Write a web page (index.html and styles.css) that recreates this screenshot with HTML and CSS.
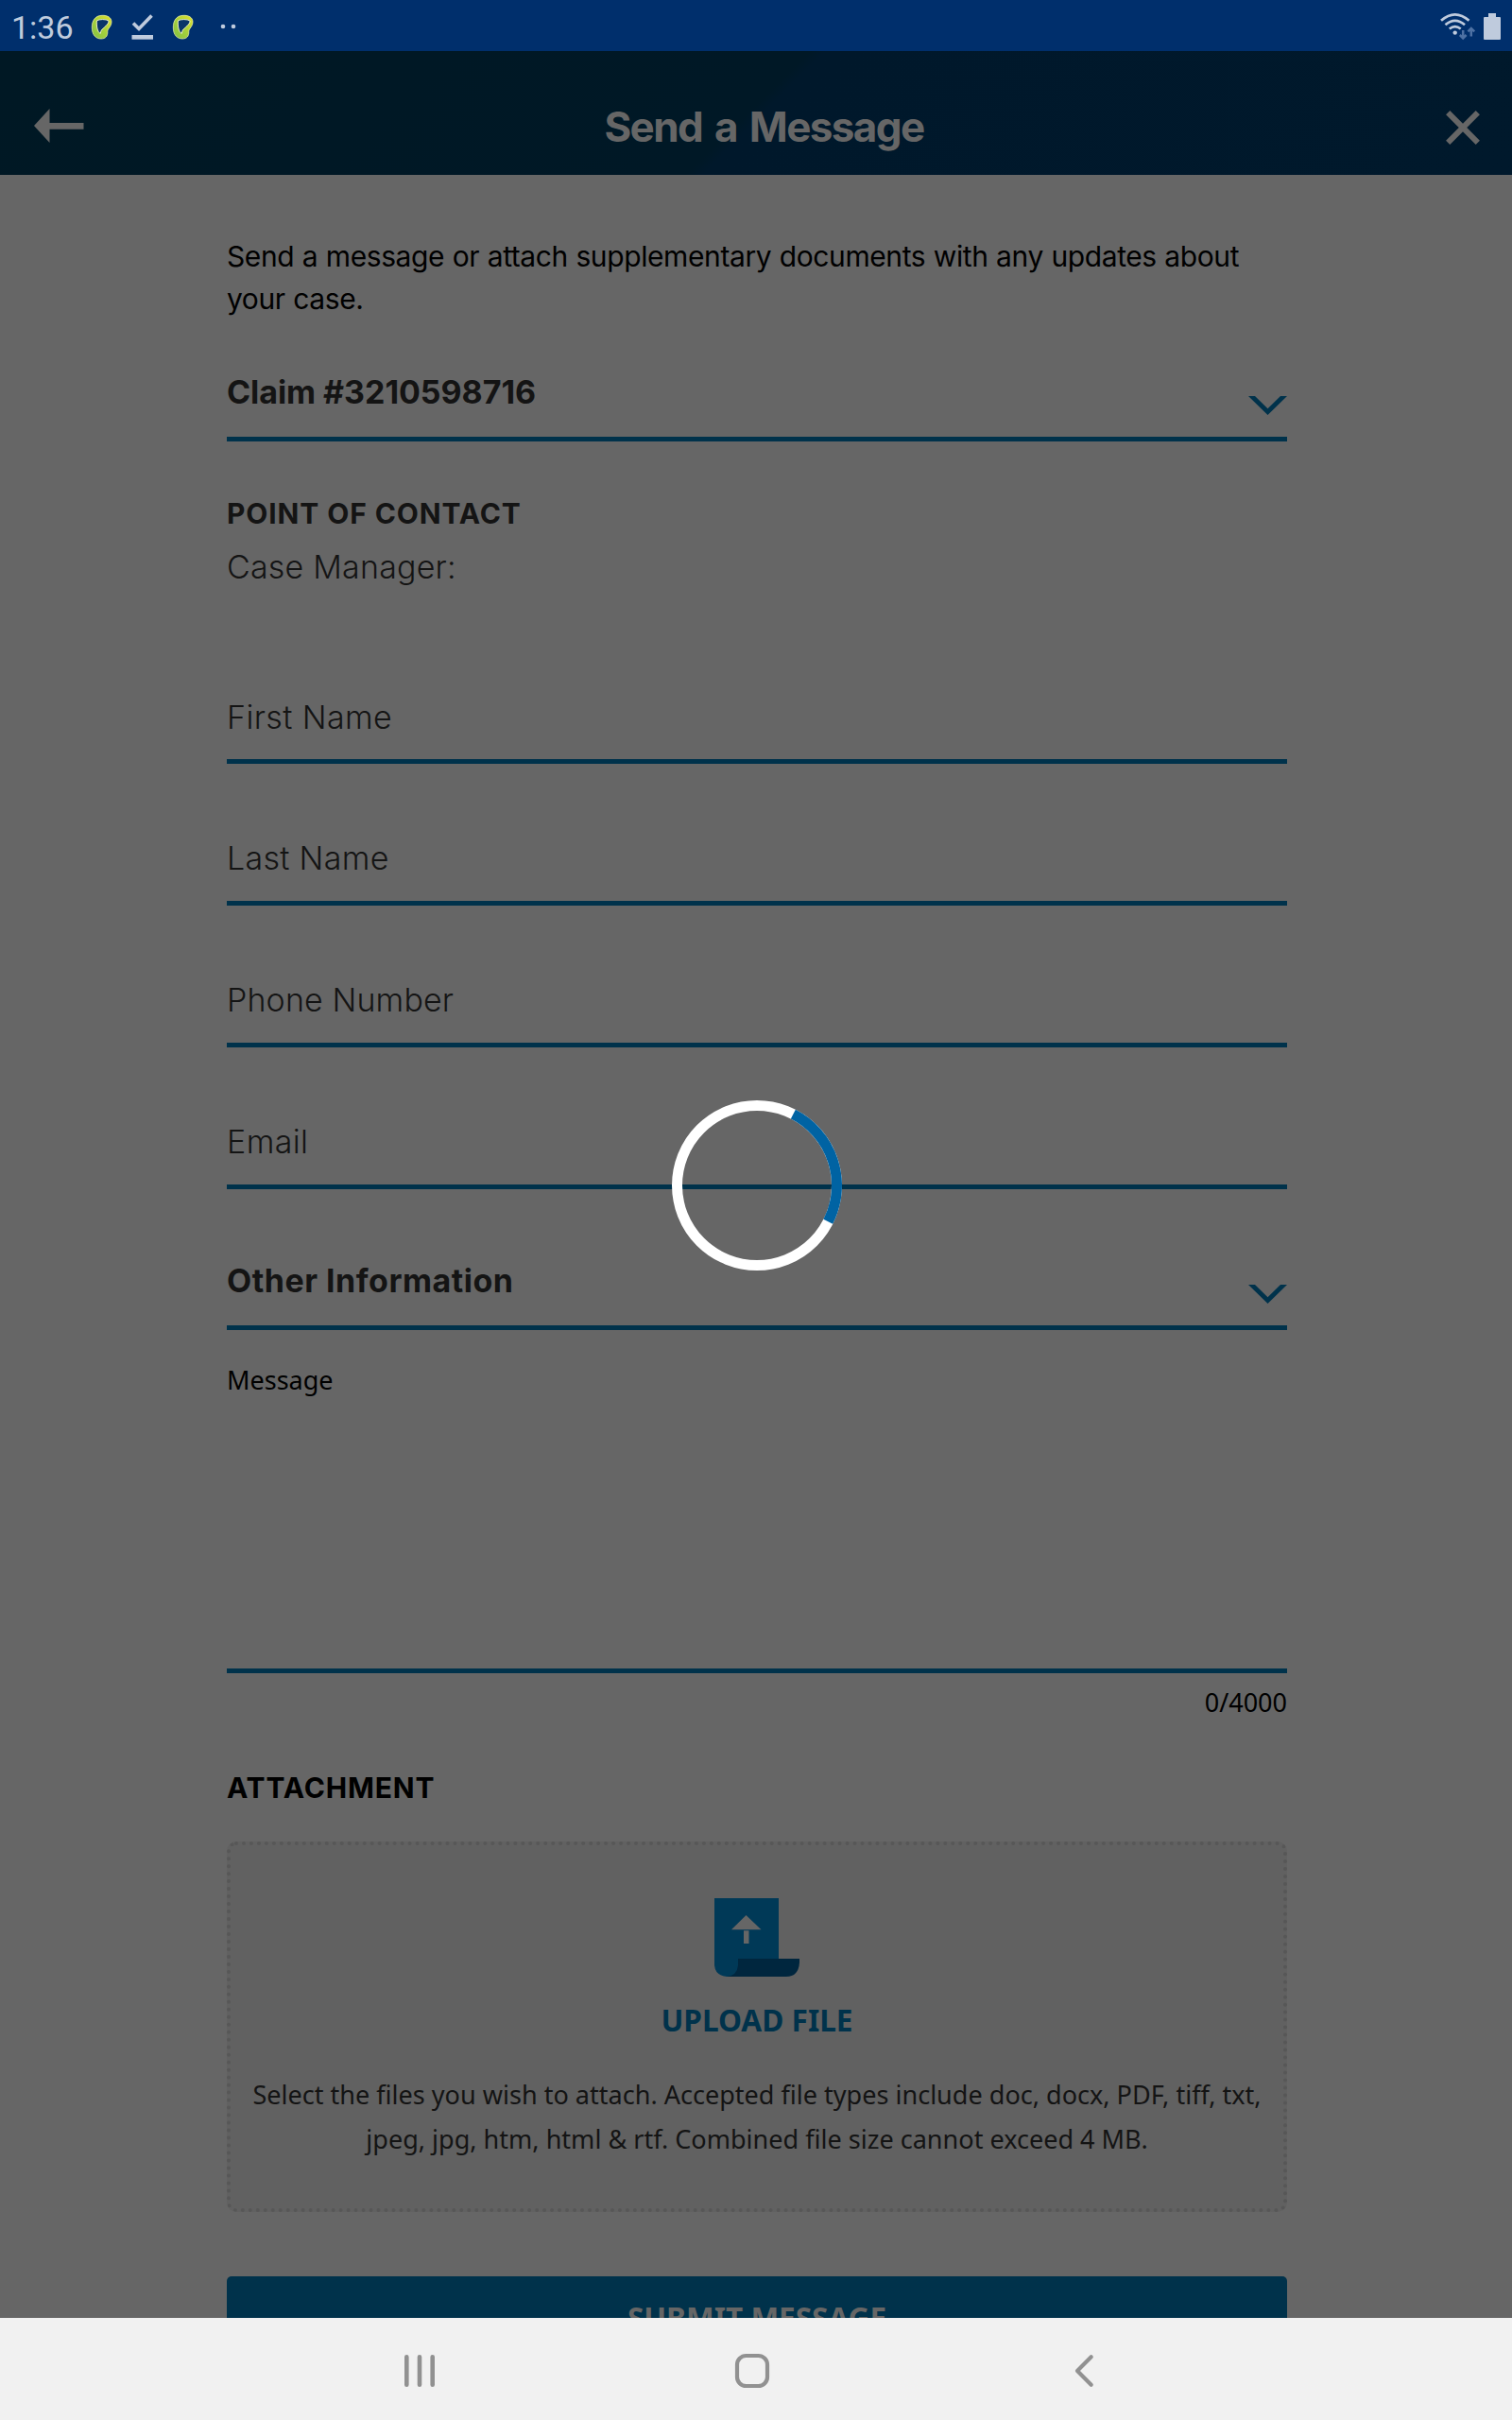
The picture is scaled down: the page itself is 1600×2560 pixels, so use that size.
FILE: index.html
```html
<!DOCTYPE html>
<html lang="en">
<head>
<meta charset="utf-8">
<title>Send a Message</title>
<link rel="stylesheet" href="styles.css">
</head>
<body>
<div class="screen">
  <div class="status-bar">
    <span class="clock">1:36</span>
    <svg class="status-left" width="180" height="54" viewBox="80 0 180 54" aria-hidden="true">
      <defs>
        <linearGradient id="lime" x1="1" y1="0" x2="0" y2="1">
          <stop offset="0" stop-color="#e2e22c"/><stop offset=".55" stop-color="#a4cf3c"/><stop offset="1" stop-color="#7fc043"/>
        </linearGradient>
        <g id="call">
          <path d="M108 16.300C100.500 16.500 97.300 22 97.300 29C97.300 37 101.500 41 107 41C112 41 114 38 113.800 33.500C113.700 30 118 28.500 118 23C118 18.500 113.500 16 108 16.300Z" fill="url(#lime)" stroke="#f4f7b0" stroke-width=".7"/>
          <path d="M102.500 21.800C105 20.300 112 20 115 22C115.500 24.500 112 27.500 109.800 29.500C107.500 31.200 106.500 33 106.300 35.500C103 34 101.800 27 102.500 21.800Z" fill="#0b3568" stroke="#f7fbd5" stroke-width=".9"/>
        </g>
      </defs>
      <use href="#call"/>
      <path d="M141 24.500l6 6L160.500 16.500" fill="none" stroke="#bfcbdd" stroke-width="3.600"/>
      <path d="M139.500 37h22.500v4.700h-22.500z" fill="#bfcbdd"/>
      <use href="#call" x="86"/>
      <circle cx="236" cy="28" r="2.300" fill="#bfcbdd"/><circle cx="247" cy="28" r="2.300" fill="#bfcbdd"/>
    </svg>
    <svg class="status-right" width="80" height="54" viewBox="1520 0 80 54" aria-hidden="true">
      <g fill="none" stroke="#bfcbdd" stroke-width="2.700">
        <path d="M1525 21.800Q1539.700 9 1554.500 21.800"/>
        <path d="M1529.500 26.200Q1539.700 17.500 1550 26.200"/>
        <path d="M1533.800 30.500Q1539.700 25.800 1545.700 30.500"/>
      </g>
      <circle cx="1539.700" cy="34.600" r="2.200" fill="#bfcbdd"/>
      <path d="M1548.200 32v8M1544.800 37l3.400 3.400l3.400-3.400M1556.800 38.500v-8M1553.400 33.300l3.400-3.400l3.400 3.400" fill="none" stroke="#4e71a3" stroke-width="2.500"/>
      <path d="M1575 14h8v4h4q1 0 1 1v22q0 1-1 1h-16q-1 0-1-1v-22q0-1 1-1h4z" fill="#bfcbdd"/>
    </svg>
  </div>

  <header class="header">
    <svg class="back" width="53" height="36" viewBox="0 0 53 36" aria-label="Back"><path d="M0 18L16.500 0V15H52.500V21.700H16.500V36Z" fill="#666"/></svg>
    <h1 class="title">Send a Message</h1>
    <svg class="close" width="36" height="36" viewBox="0 0 36 36" aria-label="Close"><path d="M2.200 2.200L33.800 33.800M33.800 2.200L2.200 33.800" stroke="#666" stroke-width="6"/></svg>
  </header>

  <main class="content">
    <p class="intro">Send a message or attach supplementary documents with any updates about<br>your case.</p>
    <div class="select claim">
      <span>Claim #3210598716</span>
      <svg class="chevron" width="41" height="20" viewBox="0 0 41 20"><path d="M0 0H7L20.500 13.300L34 0H41L20.500 20Z" fill="#00324b"/></svg>
    </div>
    <h2 class="contact-title">POINT OF CONTACT</h2>
    <p class="manager">Case Manager:</p>
    <div class="fields">
      <div class="field first">First Name</div>
      <div class="field last">Last Name</div>
      <div class="field phone">Phone Number</div>
      <div class="field email">Email</div>
    </div>
    <div class="select topic">
      <span>Other Information</span>
      <svg class="chevron" width="41" height="20" viewBox="0 0 41 20"><path d="M0 0H7L20.500 13.300L34 0H41L20.500 20Z" fill="#00324b"/></svg>
    </div>
    <div class="message">Message</div>
    <div class="counter">0/4000</div>
    <h2 class="attachment-title">ATTACHMENT</h2>
    <section class="upload">
      <svg class="upload-icon" width="90" height="83" viewBox="0 0 90 83" aria-hidden="true">
        <path d="M20 64H90V68Q89 83 76 83H13Z" fill="#00263e"/>
        <path d="M0 0H68V64H25V71Q24 82 13 83Q1 82 0 71Z" fill="#003957"/>
        <path d="M33.500 18L49.500 33.300H18Z" fill="#666"/><path d="M31 34.300h5.500V48H31z" fill="#666"/>
      </svg>
      <div class="upload-label">UPLOAD FILE</div>
      <p class="upload-help">Select the files you wish to attach. Accepted file types include doc, docx, PDF, tiff, txt,<br>jpeg, jpg, htm, html &amp; rtf. Combined file size cannot exceed 4 MB.</p>
    </section>
    <div class="submit">SUBMIT MESSAGE</div>
  </main>

  <nav class="nav-bar">
    <svg width="1600" height="108" viewBox="0 2452 1600 108" fill="none" stroke="#919191" stroke-width="4.600" stroke-linecap="round" stroke-linejoin="round">
      <path d="M430.300 2493.300v29.400M444 2493.300v29.400M457.700 2493.300v29.400"/>
      <rect x="780" y="2492" width="32" height="32" rx="9.500" stroke-width="4.200"/>
      <path d="M1154.700 2493.300L1140 2508L1154.700 2522.700" stroke-width="4.200"/>
    </svg>
  </nav>

  <svg class="spinner" width="180" height="180" viewBox="-90 -90 180 180" fill="none" stroke-width="11">
    <circle r="84.500" stroke="#fff"/>
    <path d="M38.360 -75.290A84.500 84.500 0 0 1 75.290 38.360" stroke="#0063a3"/>
  </svg>
</div>
</body>
</html>
```
FILE: styles.css
```css
* { box-sizing: border-box; }
body, h1, h2, p { margin: 0; }
body { background: #666; }
svg { display: block; flex: none; }

.screen {
  position: relative;
  display: flex;
  flex-direction: column;
  width: 1600px;
  height: 2560px;
  overflow: hidden;
  font-family: Inter, "Liberation Sans", sans-serif;
  color: #141414;
}

.status-bar {
  display: flex;
  height: 54px;
  background: #002f6c;
}
.clock {
  width: 80px;
  padding-left: 12px;
  font: 400 34px/58px Roboto, sans-serif;
  color: #bfcbdd;
}
.status-right { margin-left: auto; }

.header {
  display: grid;
  grid-template-columns: 200px 1fr 200px;
  height: 131px;
  padding: 0 34px 0 36px;
  background: linear-gradient(135deg, #001824 0%, #001826 49.500%, #00182b 50.500%, #00192c 100%);
}
.back { margin-top: 61px; }
.close { margin-top: 63px; justify-self: end; }
.title {
  padding-top: 53px;
  padding-left: 15px;
  font-size: 44px;
  font-weight: 700;
  line-height: 54px;
  letter-spacing: -1.6px;
  word-spacing: 4px;
  text-align: center;
  color: #666;
}

.content {
  height: 2267px;
  padding: 64px 238px 0 240px;
  overflow: hidden;
}
.intro {
  font-size: 30px;
  line-height: 45px;
  letter-spacing: -.4px;
  word-spacing: .5px;
  white-space: nowrap;
  color: #000;
}
.select {
  display: flex;
  justify-content: space-between;
  border-bottom: 5px solid #00324b;
  font-size: 34px;
  font-weight: 700;
  line-height: 40px;
}
.chevron { margin-top: 24px; }
.claim { height: 128px; padding-top: 56px; letter-spacing: -.05px; }
.topic { height: 149px; padding-top: 77px; letter-spacing: .5px; }

.contact-title {
  margin-top: 58px;
  font-size: 30px;
  line-height: 36px;
  letter-spacing: .88px;
}
.manager {
  margin-top: 19px;
  font-size: 34px;
  font-weight: 350;
  line-height: 40px;
  letter-spacing: .2px;
}
.fields { margin-top: 38px; }
.field {
  height: 150px;
  padding-top: 80px;
  border-bottom: 5px solid #00324b;
  font-size: 34px;
  font-weight: 350;
  line-height: 40px;
}
.first { padding-top: 81px; letter-spacing: .38px; }
.last { letter-spacing: .3px; }
.phone { letter-spacing: .12px; }
.email { letter-spacing: .4px; }

.message, .counter {
  font-family: "Noto Sans", sans-serif;
  font-size: 27px;
  line-height: 36px;
  color: #000;
}
.message {
  height: 363px;
  padding-top: 35px;
  border-bottom: 5px solid #00324b;
}
.counter { margin-top: 13px; text-align: right; }

.attachment-title {
  margin-top: 54px;
  font-size: 30px;
  line-height: 36px;
  letter-spacing: .85px;
  color: #000;
}
.upload {
  display: flex;
  flex-direction: column;
  align-items: center;
  height: 392px;
  margin-top: 39px;
  padding-top: 56px;
  border: 4px dotted #575757;
  border-radius: 10px;
  background: #616161;
  font-family: "Noto Sans", sans-serif;
}
.upload-label {
  margin-top: 26px;
  font-size: 31.6px;
  font-weight: 700;
  line-height: 40px;
  color: #00324b;
}
.upload-help {
  margin-top: 35px;
  font-size: 27.05px;
  line-height: 47px;
  text-align: center;
  white-space: nowrap;
}
.submit {
  height: 100px;
  margin-top: 68px;
  padding-top: 24px;
  border-radius: 5px;
  background: #00324b;
  font-family: "Noto Sans", sans-serif;
  font-size: 31.5px;
  font-weight: 700;
  line-height: 40px;
  text-align: center;
  color: #666;
}

.nav-bar { height: 108px; background: #f1f1f1; }

.spinner {
  position: absolute;
  left: 711px;
  top: 1164px;
}
```
